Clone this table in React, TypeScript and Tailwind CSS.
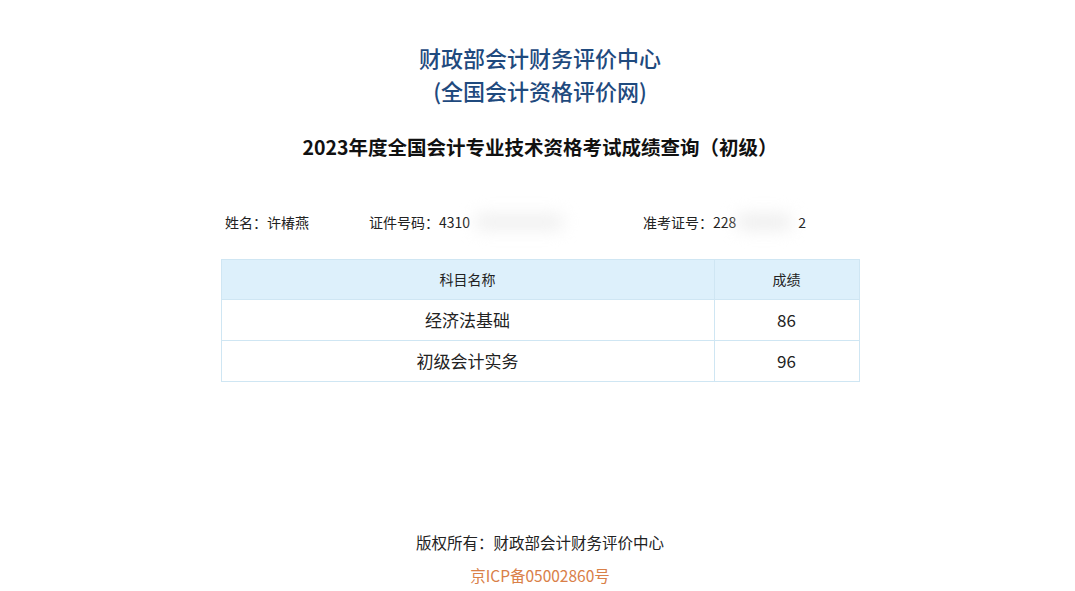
const font = "font-['Noto_Sans_CJK_SC','Noto_Sans',sans-serif]"

const scores = [
    { subject: '经济法基础', score: 86 },
    { subject: '初级会计实务', score: 96 },
]

export default function App() {
    return <div className={`${font} w-[1075px] h-[591px] bg-white flex flex-col items-center`}>
        <div className="mt-[41px] ml-[5px] text-[22px] leading-[33px] font-medium text-[#1f4a7e] text-center">
            <div>财政部会计财务评价中心</div>
            <div>(全国会计资格评价网)</div>
        </div>

        <h1 className="mt-[26px] ml-[5px] text-[19.5px] leading-[28px] font-bold text-[#111]">
            2023年度全国会计专业技术资格考试成绩查询（初级）
        </h1>

        <div className="mt-[51px] ml-[5px] w-[638px] flex items-center text-[14px] leading-[20px] text-[#222]">
            <div className="ml-[4px] w-[144px]">姓名：许椿燕</div>
            <div className="flex items-center w-[274px]">
                证件号码：4310
                <span className="ml-1 w-[90px] h-[16px] rounded-full bg-[#f0f0f0] blur-sm"></span>
            </div>
            <div className="flex items-center">
                准考证号：228
                <span className="w-[56px] h-[16px] rounded-full bg-[#eeeeee] blur-sm"></span>
                <span className="ml-[6px]">2</span>
            </div>
        </div>

        <table className="mt-[27px] ml-[5px] w-[639px] border-collapse border border-[#cfe6f3] text-[#222]">
            <thead>
                <tr className="bg-[#ddf0fb] h-[40px] text-[14px]">
                    <th className="font-normal border border-[#cfe6f3] w-[493px]">科目名称</th>
                    <th className="font-normal border border-[#cfe6f3]">成绩</th>
                </tr>
            </thead>
            <tbody>
                {scores.map((row) => (
                    <tr key={row.subject} className="h-[41px] text-[17px]">
                        <td className="text-center border border-[#cfe6f3]">{row.subject}</td>
                        <td className="text-center border border-[#cfe6f3]">{row.score}</td>
                    </tr>
                ))}
            </tbody>
        </table>

        <div className="mt-auto mb-[6px] ml-[5px] flex flex-col items-center">
            <div className="text-[15.5px] leading-[20px] text-[#222]">版权所有：财政部会计财务评价中心</div>
            <div className="mt-[13px] text-[15.5px] leading-[20px] text-[#d98048]">京ICP备05002860号</div>
        </div>
    </div>
}
